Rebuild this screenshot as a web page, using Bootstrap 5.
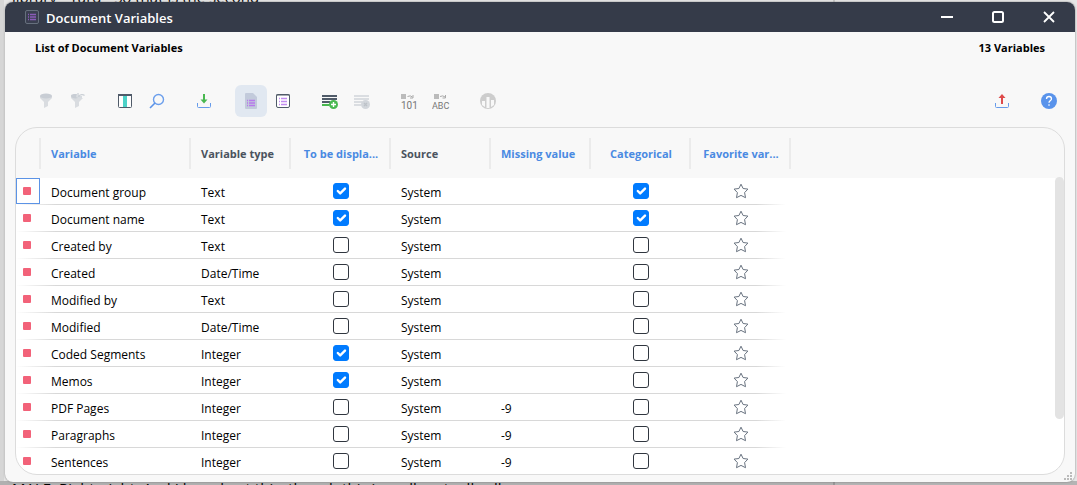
<!DOCTYPE html>
<html lang="en">
<head>
<meta charset="utf-8">
<meta name="viewport" content="width=device-width, initial-scale=1">
<title>Document Variables</title>
<link href="https://cdn.jsdelivr.net/npm/bootstrap@5.3.0/dist/css/bootstrap.min.css" rel="stylesheet">
<style>
html, body { height: 100%; }
body { font-family: "Open Sans", "Noto Sans", sans-serif; font-size: 12px; line-height: 16px; color: #000; background: #c4c4c4; overflow: hidden; }
.behind { position: absolute; left: 0; right: 0; z-index: -1; font-size: 15px; line-height: 18px; white-space: nowrap; overflow: hidden; }
.behind-top { top: 0; bottom: 4px; background: linear-gradient(90deg, #d6d6d6 4px, #e6e6e6 4px 833px, #c8c8c8 833px 835px, #e6e6e6 835px); }
.behind-top span { display: block; margin: -12px 0 0 12px; }
.behind-bottom { bottom: 0; height: 4px; background: linear-gradient(90deg, #b0b0b0 833px, #969696 833px 835px, #b4b4b4 835px); }
.behind-bottom span { display: block; margin: -2px 0 0 12px; }
.page-fill { height: 100%; padding: 2px 2px 3px 5px; }
.dialog-window { height: 100%; background: #f8f8f8; border-radius: 8px; overflow: hidden; box-shadow: 0 0 2px #777; position: relative; }
.titlebar { height: 30px; background: #353b49; color: #fff; padding: 0 13px 0 20px; }
.titlebar h1 { font-size: 13px; line-height: 18px; font-weight: 600; margin: 2px 0 0 7px; }
.plain { border: 0; background: none; padding: 0; display: flex; align-items: center; justify-content: center; color: inherit; }
.caption-group { gap: 24px; }
.caption-btn { width: 27px; height: 28px; }
.summary { padding: 8px 30px 0; font-size: 11px; font-weight: 700; height: 53px; }
.tools { height: 32px; padding: 0 10px 0 25px; }
.tool { width: 32px; height: 32px; border-radius: 6px; }
.tool.apart { margin-left: 15px; }
.tool.active { background: #e1e8f1; }
.panel { margin: 10px 10px 7px; flex: 1 1 0; min-height: 0; border: 1px solid #dcdcdc; border-radius: 22px; background: linear-gradient(#f8f8f8 50px, #fff 50px); overflow: hidden; position: relative; }
.grid { table-layout: fixed; width: 775px; border-collapse: separate; border-spacing: 0; }
.grid th { height: 50px; padding: 2px 10px 0; font-size: 11px; font-weight: 700; color: #4a8ae2; white-space: nowrap; overflow: hidden; text-overflow: ellipsis; background: linear-gradient(#ebebeb, #ebebeb) right 10px / 2px 31px no-repeat; background-position: right 10px; }
.grid th.dark { color: #4b535e; }
.grid td { height: 27px; padding: 2px 10px 0; white-space: nowrap; }
.grid tbody tr { background: linear-gradient(90deg, #fff, #d8d8d8 40px, #d8d8d8 740px, #fff 770px) left bottom / 100% 1px no-repeat; }
.grid .mark-cell { padding: 0; vertical-align: top; }
.mark-cell span { display: flex; align-items: center; width: 24px; height: 26px; padding: 0 0 0 7px; }
.mark-cell span::before { content: ""; width: 8px; height: 8px; background: #f26279; border-radius: 1px; }
.mark-cell .focused { border: 1px solid #5b93e6; padding-left: 6px; }
.grid td.mid { padding: 0 0 2px; text-align: center; }
.grid td.mid .plain { margin: auto; }
.form-check-input.tick[type=checkbox] { width: 16px; height: 16px; margin: 0; border: 1px solid #30363f; border-radius: 3px; vertical-align: middle; }
.form-check-input.tick[type=checkbox]:checked { background-color: #007bff; border-color: #007bff; background-size: 16px; }
.thumb { position: absolute; right: 0; top: 49px; width: 9px; height: 242px; background: #e3e3e3; border-radius: 5px; }
.grip { position: absolute; right: 3px; bottom: 2px; }
</style>
</head>
<body>
<div class="behind behind-top" aria-hidden="true"><span>library - Yard - So that is the second</span></div>
<div class="behind behind-bottom" aria-hidden="true"><span>MALE: Right, right. And I have kept this, though this is really actually all</span></div>

<svg class="d-none">
  <symbol id="star" viewBox="0 0 16 16"><path d="M8 1.200 10.100 5.500 14.900 6.100 11.600 9.600 12.500 14.700 8 12.400 3.500 14.700 4.400 9.600 1.100 6.100 5.900 5.500Z" fill="none" stroke="#68727f" stroke-linejoin="round"/></symbol>
</svg>

<div class="page-fill">
<main class="dialog-window d-flex flex-column">
  <header class="titlebar d-flex align-items-center">
    <svg width="14" height="14" viewBox="0 0 14 14"><rect x=".5" y=".5" width="13" height="13" rx="1.5" fill="#3a3f50" stroke="#66707d"/><path d="M3 4.500h1M5 4.500h6M3 7h1M5 7h6M3 9.500h1M5 9.500h6" stroke="#8a5cb8" stroke-width="1.400"/></svg>
    <h1>Document Variables</h1>
    <div class="caption-group d-flex ms-auto">
      <button class="plain caption-btn" aria-label="Minimize"><svg width="12" height="12"><path d="M0 6h12" stroke="#fff" stroke-width="2"/></svg></button>
      <button class="plain caption-btn" aria-label="Maximize"><svg width="12" height="12"><rect x="1" y="1" width="10" height="10" rx="1.5" fill="none" stroke="#fff" stroke-width="2"/></svg></button>
      <button class="plain caption-btn" aria-label="Close"><svg width="12" height="12"><path d="m1 1 10 10M11 1 1 11" stroke="#fff" stroke-width="1.8"/></svg></button>
    </div>
  </header>
  <div class="summary d-flex justify-content-between"><span>List of Document Variables</span><span>13 Variables</span></div>

  <div class="tools d-flex" role="toolbar" aria-label="Variables">
    <button class="plain tool" aria-label="Filter"><svg width="16" height="16"><path d="M2 3v2l4 4v6l4-2V9l4-4V3Z" fill="#d9dce0"/><ellipse cx="8" cy="3" rx="6" ry="2.5" fill="#c8cdd4"/></svg></button>
    <button class="plain tool" aria-label="Reset filters"><svg width="16" height="16"><path d="M1 3v2l4 4v6l4-2V9l4-4H8L6 1Z" fill="#d9dce0"/><path d="M1 3C1 1 4 1 7 1L6 4l2 1C5 6 1 5 1 3Z" fill="#c8cdd4"/><path d="M8 0v4h4M8.500 3.500C10 1.500 13 1 14.500 2.500" fill="none" stroke="#ccd1d7" stroke-width="1.3"/></svg></button>
    <button class="plain tool apart" aria-label="Select columns"><svg width="14" height="14"><rect x=".5" y=".5" width="13" height="13" rx="1" fill="#fff" stroke="#505b69"/><path d="M0 1h14" stroke="#505b69" stroke-width="2"/><path d="M5 2h4v11H5z" fill="#4dd2c8"/></svg></button>
    <button class="plain tool" aria-label="Search"><svg width="16" height="16"><circle cx="9.500" cy="6.500" r="5" fill="none" stroke="#6c9fec" stroke-width="1.4"/><path d="m6 10-5 5" stroke="#5b93e8" stroke-width="1.6"/></svg></button>
    <button class="plain tool apart" aria-label="Import"><svg width="14" height="14"><path d="M.500 9v3.500q0 1 1 1h11q1 0 1-1V9" fill="none" stroke="#669bea"/><path d="M7 0v7" stroke="#49b850" stroke-width="2"/><path d="m3.500 5.500 3.500 4 3.500-4Z" fill="#49b850"/></svg></button>
    <button class="plain tool active apart" aria-label="Document variables"><svg width="12" height="16"><path d="M1 0h7l4 4v11q0 1-1 1H1q-1 0-1-1V1q0-1 1-1Z" fill="#c2cadb"/><path d="M2 7.500h1M4 7.500h6M2 10h1M4 10h6M2 12.500h1M4 12.500h6" stroke="#b779ec" stroke-width="1.3"/></svg></button>
    <button class="plain tool" aria-label="Variable list"><svg width="14" height="14"><rect x=".5" y=".5" width="13" height="13" rx="1.500" fill="#fff" stroke="#505b69"/><path d="M0 1h14" stroke="#505b69"/><path d="M3 4.500h1M5 4.500h6M3 7.500h1M5 7.500h6M3 10.500h1M5 10.500h6" stroke="#c28cf0" stroke-width="1.4"/></svg></button>
    <button class="plain tool apart" aria-label="New variable"><svg width="16" height="16"><path d="M0 3h15M0 6h15M0 9h8" stroke="#505b69" stroke-width="2"/><path d="M0 12h7" stroke="#49b850" stroke-width="2"/><circle cx="11.500" cy="11.500" r="4.500" fill="#49b850"/><path d="M9 11.500h5M11.500 9v5" stroke="#fff" stroke-width="1.4"/></svg></button>
    <button class="plain tool" aria-label="Delete variable"><svg width="16" height="16"><path d="M0 3h15M0 6h15M0 9h8M0 12h7" stroke="#dadde1" stroke-width="1.800"/><circle cx="11.500" cy="11.500" r="4.500" fill="#d2d6db"/><path d="m10 10 3 3M13 10l-3 3" stroke="#bdc2c8" stroke-width="1.200"/></svg></button>
    <button class="plain tool apart" aria-label="Numeric values"><svg width="18" height="18"><path d="M1 2h5v5H1z" fill="#bbb"/><path d="M7.500 4.500q3-1.500 5 .5M13 3v3h-3" fill="none" stroke="#aaa"/><text x="1" y="17" font-family="Roboto, sans-serif" font-size="10" fill="#777">101</text></svg></button>
    <button class="plain tool" aria-label="Text values"><svg width="18" height="18"><path d="M2 2h5v5H2z" fill="#bbb"/><path d="M8 4.500q3-1.500 5 .5M13.500 3v3h-3" fill="none" stroke="#aaa"/><text x="0" y="17" font-family="Roboto, sans-serif" font-size="9" fill="#777">ABC</text></svg></button>
    <button class="plain tool apart" aria-label="Statistics"><svg width="16" height="16"><circle cx="8" cy="8" r="8" fill="#cdcdcd"/><path d="M2 8h3v6L2 12ZM6.500 4h3v11h-3ZM11 7h3v5l-3 2Z" fill="#f8f8f8"/></svg></button>
    <button class="plain tool ms-auto" aria-label="Export"><svg width="14" height="14"><path d="M.500 9v3.500q0 1 1 1h11q1 0 1-1V9" fill="none" stroke="#669bea"/><path d="M7 3v7" stroke="#de4a4a" stroke-width="2"/><path d="m3.500 4 3.500-4 3.500 4Z" fill="#de4a4a"/></svg></button>
    <button class="plain tool apart" aria-label="Help"><svg width="16" height="16"><circle cx="8" cy="8" r="8" fill="#5993eb"/><path d="M5.500 6q0-2.500 2.500-2.500T10.500 6C10.500 7.500 8 7.700 8 9.800M8 11.300v1.500" fill="none" stroke="#fff" stroke-width="1.300"/></svg></button>
  </div>

  <section class="panel" aria-label="Variables">
    <table class="grid">
      <colgroup><col style="width:25px"><col style="width:150px"><col style="width:100px"><col style="width:100px"><col style="width:100px"><col style="width:100px"><col style="width:100px"><col style="width:100px"></colgroup>
      <thead><tr><th></th><th>Variable</th><th class="dark">Variable type</th><th class="text-center">To be displa...</th><th class="dark">Source</th><th>Missing value</th><th class="text-center">Categorical</th><th class="text-center">Favorite var...</th></tr></thead>
      <tbody id="rows"></tbody>
    </table>
    <div class="thumb"></div>
  </section>
  <svg class="grip" width="8" height="8"><path d="M6 0h2v2H6zM3 3h2v2H3zM6 3h2v2H6zM0 6h2v2H0zM3 6h2v2H3zM6 6h2v2H6z" fill="#bbb"/></svg>
</main>
</div>
<script src="https://cdn.jsdelivr.net/npm/bootstrap@5.3.0/dist/js/bootstrap.bundle.min.js"></script>
<script>
const variables = [
  ["Document group", "Text", true, "", true],
  ["Document name", "Text", true, "", true],
  ["Created by", "Text", false, "", false],
  ["Created", "Date/Time", false, "", false],
  ["Modified by", "Text", false, "", false],
  ["Modified", "Date/Time", false, "", false],
  ["Coded Segments", "Integer", true, "", false],
  ["Memos", "Integer", true, "", false],
  ["PDF Pages", "Integer", false, "-9", false],
  ["Paragraphs", "Integer", false, "-9", false],
  ["Sentences", "Integer", false, "-9", false]
];
const tick = (on, label) => `<input type="checkbox" class="form-check-input tick" aria-label="${label}"${on ? " checked" : ""}>`;
document.getElementById("rows").innerHTML = variables.map(([name, type, shown, missing, cat], i) => `<tr>
  <td class="mark-cell"><span class="${i ? "" : "focused"}"></span></td><td>${name}</td><td>${type}</td>
  <td class="mid">${tick(shown, "Display " + name)}</td><td>System</td><td>${missing}</td>
  <td class="mid">${tick(cat, name + " is categorical")}</td>
  <td class="mid"><button class="plain" aria-label="Favorite ${name}"><svg width="16" height="16"><use href="#star"/></svg></button></td></tr>`).join("");
</script>
</body>
</html>
